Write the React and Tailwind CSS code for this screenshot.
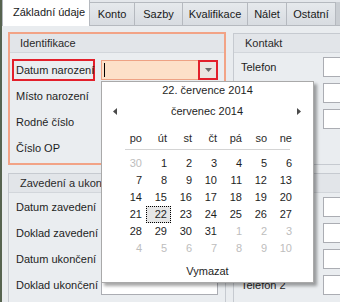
import React from "react";

const weeks = [
  [30, 1, 2, 3, 4, 5, 6],
  [7, 8, 9, 10, 11, 12, 13],
  [14, 15, 16, 17, 18, 19, 20],
  [21, 22, 23, 24, 25, 26, 27],
  [28, 29, 30, 31, 1, 2, 3],
  [4, 5, 6, 7, 8, 9, 10],
];

function isGray(r, c) {
  if (r === 0 && c === 0) return true;
  if (r === 4 && c >= 4) return true;
  if (r === 5) return true;
  return false;
}

function Input({ w = "w-[117px]" }) {
  return <div className={`${w} h-[20px] border border-[#abadb3] bg-white`} />;
}

function Row({ label, lw, pl, input = true, iw }) {
  return (
    <div className="h-[26px] flex items-center">
      <div className={`${lw} ${pl} whitespace-nowrap`}>{label}</div>
      {input && <Input w={iw} />}
    </div>
  );
}

export default function App() {
  const tabs = [
    ["Konto", "w-[45px]"],
    ["Sazby", "w-[48px]"],
    ["Kvalifikace", "w-[65px]"],
    ["Nálet", "w-[39px]"],
    ["Ostatní", "w-[49px]"],
  ];
  return (
    <div className="w-[340px] h-[302px] relative overflow-hidden bg-[#e9ecef] font-['Liberation_Sans',Arial,sans-serif] text-[11px] text-[#1e1e1e]">
      <div className="flex h-full">
        <div className="w-[2px] bg-[#56634f] shrink-0" />
        <div className="flex-1 flex flex-col min-w-0">
          {/* tabs */}
          <div className="h-[26px] flex items-end border-b border-[#b5b9bf] bg-[#e4e7eb] shrink-0">
            <div className="w-[88px] h-[27px] -mb-px bg-white border-x border-t border-[#b5b9bf] flex items-center pl-[10px] pb-[2px] text-[#1a1a1a]">
              Základní údaje
            </div>
            {tabs.map(([t, w]) => (
              <div
                key={t}
                className={`${w} h-[23px] bg-gradient-to-b from-[#e6e9ec] to-[#d8dce1] border-t border-r border-[#b5b9bf] flex items-center justify-center text-[#1a1a1a]`}
              >
                {t}
              </div>
            ))}
            <div className="flex-1 h-[23px] bg-[#c9cdd2]" />
          </div>
          {/* content */}
          <div className="flex gap-[7px] pt-[6px] pl-[6px]">
            <div className="w-[218px] shrink-0 flex flex-col gap-[8px]">
              {/* Identifikace */}
              <div className="h-[133px] border-2 border-[#f2a386] bg-[#eaedf0]">
                <div className="h-[19px] border-b border-[#d2d6db] bg-[#e2e5e9] flex items-center pl-[10px] text-[#2a2a2a]">
                  Identifikace
                </div>
                <div className="pt-[4px]">
                  <div className="h-[26px] flex items-center">
                    <div className="ml-[2px] w-[83px] h-[22px] border-2 border-[#e3202b] pl-[2px] flex items-center whitespace-nowrap">
                      Datum narození
                    </div>
                    <div className="ml-[6px] w-[117px] h-[20px] border border-[#eea284] bg-[#fde0c8] flex">
                      <div className="flex-1 flex items-center pl-[2px]">
                        <div className="w-px h-[14px] bg-black" />
                      </div>
                      <div className="w-[20px] h-[20px] -my-px -mr-px border-2 border-[#e3202b] bg-[#ebe6e2] flex items-center justify-center">
                        <svg width="7" height="4" viewBox="0 0 7 4">
                          <path d="M0 0 L7 0 L3.5 4Z" fill="#6b6b6b" />
                        </svg>
                      </div>
                    </div>
                  </div>
                  <Row label="Místo narození" lw="w-[91px]" pl="pl-[6px]" />
                  <Row label="Rodné číslo" lw="w-[91px]" pl="pl-[6px]" />
                  <Row label="Číslo OP" lw="w-[91px]" pl="pl-[6px]" />
                </div>
              </div>
              {/* Zavedeni */}
              <div className="h-[140px] border border-[#c6cad0] bg-[#eaedf0]">
                <div className="h-[19px] border-b border-[#d2d6db] bg-[#e2e5e9] flex items-center pl-[11px] text-[#2a2a2a] whitespace-nowrap">
                  Zavedení a ukončení
                </div>
                <div className="pt-[1px]">
                  <Row label="Datum zavedení" lw="w-[92px]" pl="pl-[7px]" />
                  <Row label="Doklad zavedení" lw="w-[92px]" pl="pl-[7px]" />
                  <Row label="Datum ukončení" lw="w-[92px]" pl="pl-[7px]" />
                  <Row label="Doklad ukončení" lw="w-[92px]" pl="pl-[7px]" />
                </div>
              </div>
            </div>
            <div className="w-[130px] shrink-0 flex flex-col gap-[8px]">
              <div className="mt-px h-[132px] border border-[#c6cad0] bg-[#eaedf0]">
                <div className="h-[19px] border-b border-[#d2d6db] bg-[#e2e5e9] flex items-center pl-[11px] text-[#2a2a2a]">
                  Kontakt
                </div>
                <div className="pt-[1px]">
                  <Row label="Telefon" lw="w-[92px]" pl="pl-[7px]" iw="w-[40px]" />
                  <Row label="" lw="w-[92px]" pl="pl-[7px]" iw="w-[40px]" />
                  <Row label="" lw="w-[92px]" pl="pl-[7px]" iw="w-[40px]" />
                </div>
              </div>
              <div className="h-[140px] border border-[#c6cad0] bg-[#eaedf0]">
                <div className="h-[19px] border-b border-[#d2d6db] bg-[#e2e5e9]" />
                <div className="pt-[1px]">
                  <Row label="" lw="w-[92px]" pl="pl-[7px]" iw="w-[40px]" />
                  <Row label="" lw="w-[92px]" pl="pl-[7px]" iw="w-[40px]" />
                  <Row label="" lw="w-[92px]" pl="pl-[7px]" iw="w-[40px]" />
                  <Row label="Telefon 2" lw="w-[92px]" pl="pl-[7px]" iw="w-[40px]" />
                </div>
              </div>
            </div>
          </div>
        </div>
      </div>

      {/* calendar popup */}
      <div className="absolute left-[101px] top-[81px] w-[213px] h-[202px] bg-white border border-[#a9a9a9] shadow-[3px_3px_3px_rgba(0,0,0,0.35)] text-[#1e1e1e]">
        <div className="h-[16px] flex items-center justify-center">22. července 2014</div>
        <div className="mt-[4px] h-[18px] flex items-center pl-[11px] pr-[12px]">
          <svg width="4" height="7" viewBox="0 0 4 7">
            <path d="M4 0 L0 3.5 L4 7Z" fill="#4a4a4a" />
          </svg>
          <div className="flex-1 text-center">červenec 2014</div>
          <svg width="4" height="7" viewBox="0 0 4 7">
            <path d="M0 0 L4 3.5 L0 7Z" fill="#4a4a4a" />
          </svg>
        </div>
        <div className="mt-[10px] ml-[19px] w-[175px] h-[16px] grid grid-cols-7 text-[#2a2a2a]">
          {["po", "út", "st", "čt", "pá", "so", "ne"].map((d) => (
            <div key={d} className="text-right pr-[4px] leading-[16px]">
              {d}
            </div>
          ))}
        </div>
        <div className="mt-[3px] ml-[23px] w-[165px] h-px bg-[#d4d4d4]" />
        <div className="mt-[5px] ml-[19px] w-[175px] grid grid-cols-7">
          {weeks.map((wk, r) =>
            wk.map((d, c) => {
              const sel = r === 3 && c === 1;
              return (
                <div
                  key={`${r}-${c}`}
                  className={
                    sel
                      ? "h-[17px] border border-dotted border-black bg-[#e6e6e6] text-right pr-[3px] leading-[15px]"
                      : `h-[17px] text-right pr-[4px] leading-[17px] ${isGray(r, c) ? "text-[#bdbdbd]" : "text-[#1e1e1e]"}`
                  }
                >
                  {d}
                </div>
              );
            })
          )}
        </div>
        <div className="mt-[5px] h-[18px] flex items-center justify-center">Vymazat</div>
      </div>
    </div>
  );
}
